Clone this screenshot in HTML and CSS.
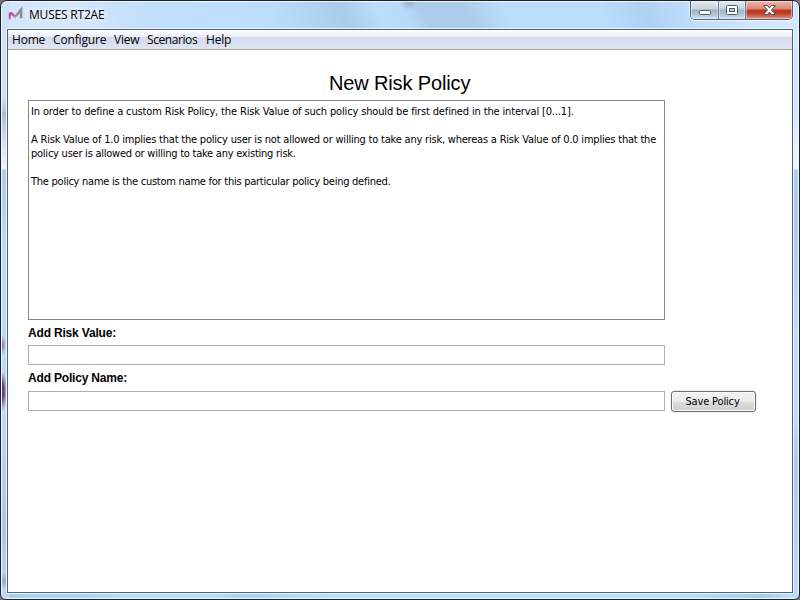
FILE: index.html
```html
<!DOCTYPE html>
<html lang="en">
<head>
<meta charset="utf-8">
<title>MUSES RT2AE</title>
<link rel="stylesheet" href="styles.css">
</head>
<body>
<div class="window">
  <header class="titlebar">
    <svg class="logo" width="16" height="16" viewBox="0 0 16 16" fill="none">
      <path d="M1.8 14V9.4Q1.9 7.3 3.8 8.7L6.4 11.2Q7.2 11.8 8 11" stroke="#bd5793" stroke-width="2.3"/>
      <path d="M7.8 11.2L13.1 4.8V13.2" stroke="#898c92" stroke-width="2.5"/>
      <path d="M2 11.5V15M6 11l2 1 2-2" stroke="#d595b9" stroke-width="1"/>
    </svg>
    <span class="app-name">MUSES RT2AE</span>
    <div class="controls">
      <span class="control minimize"><svg width="28" height="17"><rect x="8.5" y="9.5" width="11" height="4" rx="1" fill="#fff" stroke="#535b6b"/></svg></span>
      <span class="control maximize"><svg width="26" height="17"><rect x="7.5" y="4.5" width="11" height="9" rx="1" fill="#fff" stroke="#535b6b"/><rect x="10.5" y="7.5" width="5" height="3" fill="#b0cbe4" stroke="#535b6b"/></svg></span>
      <span class="control close"><svg width="46" height="17"><path d="M17.5 4.5h4l2 2.5 2-2.5h4l-4 4.5 4 4.5h-4l-2-2.5-2 2.5h-4l4-4.5z" fill="#fff" stroke="#535666"/></svg></span>
    </div>
  </header>
  <main class="client">
    <nav class="menu">
      <span class="m-home">Home</span><span class="m-configure">Configure</span><span class="m-view">View</span><span class="m-scenarios">Scenarios</span><span class="m-help">Help</span>
    </nav>
    <section class="form">
      <h1><span>New Risk Policy</span></h1>
      <div class="description">
        <p class="line-a">In order to define a custom Risk Policy, the Risk Value of such policy should be first defined in the interval [0...1].</p>
        <p><span class="line-b">A Risk Value of 1.0 implies that the policy user is not allowed or willing to take any risk, whereas a Risk Value of 0.0 implies that the</span><br><span class="line-c">policy user is allowed or willing to take any existing risk.</span></p>
        <p class="line-d">The policy name is the custom name for this particular policy being defined.</p>
      </div>
      <label for="risk">Add Risk Value:</label>
      <input id="risk" type="text">
      <label for="policy">Add Policy Name:</label>
      <div class="save-row"><input id="policy" type="text"><button type="button">Save Policy</button></div>
    </section>
  </main>
</div>
</body>
</html>
```
FILE: styles.css
```css
* { box-sizing: border-box; }
body { margin: 0; background: #77706d; overflow: hidden; }
.window {
  position: relative;
  width: 800px;
  height: 600px;
  padding: 0 6px 6px;
  border: 1px solid #1d202b;
  border-radius: 7px 7px 6px 6px;
  box-shadow: inset 0 0 0 1px #eef8ff;
  background:
    radial-gradient(ellipse 9px 7px at 408px 2px, #9cb4d0, transparent),
    radial-gradient(ellipse 5px 20px at 1px 390px, #713c78 35%, transparent),
    radial-gradient(ellipse 4px 10px at 1px 344px, #8e6799, transparent),
    radial-gradient(ellipse 5px 9px at 3px 580px, #8eadd0, transparent),
    linear-gradient(#cfe1f8 0, #cfe1f8 97px, #acbed7 113px, #d3e1f4 140px, #eff4fc 168px, transparent 169px) 0 0 / 8px 100% no-repeat,
    linear-gradient(#d3e8ff 0, #d3e8ff 110px, #f0f6fd 168px, #a9cff2 169px, #aaccee 230px, #bbdefe 330px, #bbdefe 420px, #a8cbea 460px, #bbdcfa 600px) 100% 0 / 8px 100% no-repeat,
    linear-gradient(transparent 169px, #aacbed 169px, #b9dcfc 250px, #b9dafa 420px, #a9c8e7 530px, #b9dcfb 600px) 0 0 / 8px 100% no-repeat,
    linear-gradient(90deg, #a9cff0, #add0f1 75px, #bbddfc 130px, #bbddfc 210px, #acd0f1 240px, #bbdefd 330px, #bbdefd 680px, #a9ccea 760px, #c2e1fb) 0 100% / 100% 8px no-repeat,
    linear-gradient(65deg, #d3e6fb 0, #d3e6fb 80px, #bfdefb 145px, #bcdefd 250px, #aacceb 318px, #bcdefd 350px, #b8dafa 374px, #abcdea 390px, #abcdea 430px, #bcdefd 465px, #bcdefd 550px, #add1f2 590px, #c4e0fc 640px, #dcecff 740px) 0 0 / 100% 29px no-repeat,
    #b9dcfb;
}
.titlebar { display: flex; height: 28px; padding-left: 1px; }
.logo { margin-top: 4px; }
.app-name {
  margin: 5px 0 0 5px;
  font: 12px/17px "Open Sans", sans-serif;
  letter-spacing: -0.2px;
  color: #000;
  text-shadow: 0 0 7px #fff, 0 0 9px #fff;
}
.controls {
  display: flex;
  height: 19px;
  margin: 0 0 0 auto;
  border: 1px solid #526173;
  border-top: 0;
  border-radius: 0 0 5px 5px;
  overflow: hidden;
  box-shadow: 0 1px 0 #f2f9ff, 1px 0 0 #e4f1ff, -1px 0 0 #e4f1ff;
}
.control {
  height: 18px;
  background: linear-gradient(#e2ebf5, #c4d2e0 8px, #9fb1c5 9px, #b3c8dc 14px, #d4e4f2);
  box-shadow: inset 0 0 0 1px rgb(255 255 255 / 45%);
}
.control svg { display: block; }
.minimize { width: 28px; border-right: 1px solid #68798b; }
.maximize { width: 27px; border-right: 1px solid #68798b; }
.close {
  width: 46px;
  background: linear-gradient(#efb9ad, #d98776 8px, #bd3a22 9px, #bd3a22 12px, #e19680);
}
.client {
  height: 564px;
  border: 1px solid #536171;
  background: #fff;
  box-shadow: 0 0 0 1px #e8f4ff;
}
.menu {
  display: flex;
  height: 20px;
  padding-left: 4px;
  border-bottom: 1px solid #a0a0a5;
  background: linear-gradient(#fff, #e8edf5 7px, #d4daeb 7px, #e0e5f5 19px);
  font: 12px/20px "Open Sans", sans-serif;
}
.menu span { white-space: nowrap; }
.m-home { width: 41px; letter-spacing: -0.2px; }
.m-configure { width: 61px; letter-spacing: -0.15px; }
.m-view { width: 33px; letter-spacing: -0.2px; }
.m-scenarios { width: 59px; letter-spacing: -0.45px; }
.m-help { letter-spacing: -0.2px; }
.menu .m-scenarios { letter-spacing: -0.42px; }
.form { width: 749px; margin-left: 20px; padding-top: 21px; }
h1 {
  width: 637px;
  margin: 0;
  padding-left: 301px;
  font: 20px/24px "Liberation Sans", sans-serif;
  letter-spacing: -0.14px;
  height: 29px;
  white-space: nowrap;
}
.description {
  width: 637px;
  height: 220px;
  padding: 4px 2px;
  border: 1px solid #828790;
  font: 11px/14px "DejaVu Sans Condensed", "DejaVu Sans", sans-serif;
  font-stretch: condensed;
  white-space: nowrap;
}
.line-a { letter-spacing: -0.148px; }
.line-b { letter-spacing: -0.208px; }
.line-c { letter-spacing: -0.24px; }
.line-d { letter-spacing: -0.25px; }
p { margin: 0 0 14px; }
label {
  display: block;
  height: 25px;
  padding-top: 1px;
  font: bold 12px/25px "Liberation Sans", sans-serif;
  letter-spacing: -0.18px;
}
input {
  display: block;
  width: 637px;
  height: 20px;
  padding: 2px;
  border: 1px solid #abadb3;
  background: #fff;
}
.save-row { display: flex; margin-top: 1px; }
button {
  width: 85px;
  height: 21px;
  margin-left: 6px;
  padding: 0 2px 0 0;
  border: 1px solid #707070;
  border-radius: 3px;
  background: linear-gradient(#f3f3f3, #ebebeb 50%, #dddddd 51%, #cfcfcf);
  box-shadow: inset 0 0 0 1px #fbfbfb, 0 0 0 1px #f0f0f0;
  color: #000;
  font: 11px/18px "DejaVu Sans Condensed", "DejaVu Sans", sans-serif;
  font-stretch: condensed;
  letter-spacing: -0.15px;
}
```
